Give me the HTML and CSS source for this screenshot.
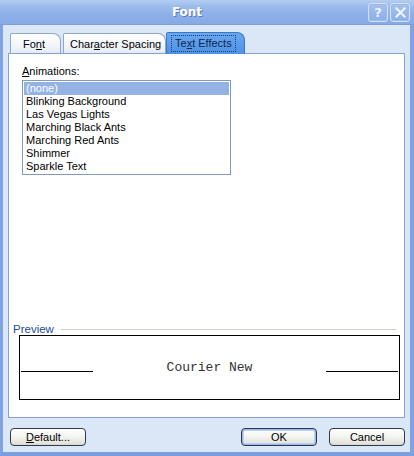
FILE: index.html
```html
<!DOCTYPE html>
<html>
<head>
<meta charset="utf-8">
<link rel="stylesheet" href="styles.css">
</head>
<body>
<div class="window">
  <div class="titlebar">
    <span class="title">Font</span>
    <div class="caption-btns">
      <span class="cbtn">?</span>
      <span class="cbtn">
        <svg width="11" height="11" viewBox="0 0 11 11"><path d="M1.5 1.5 L9.5 9.5 M9.5 1.5 L1.5 9.5" stroke="#eef3fc" stroke-width="2.2" stroke-linecap="square"/></svg>
      </span>
    </div>
  </div>
  <div class="body">
    <div class="tabs">
      <div class="tab tab-font">Fo<u>n</u>t</div>
      <div class="tab tab-spacing">Char<u>a</u>cter Spacing</div>
      <div class="tab tab-active"><span class="focus">Te<u>x</u>t Effects</span></div>
    </div>
    <div class="panel">
      <div class="label"><u>A</u>nimations:</div>
      <div class="listbox">
        <div class="item selected">(none)</div>
        <div class="item">Blinking Background</div>
        <div class="item">Las Vegas Lights</div>
        <div class="item">Marching Black Ants</div>
        <div class="item">Marching Red Ants</div>
        <div class="item">Shimmer</div>
        <div class="item">Sparkle Text</div>
      </div>
      <div class="spacer"></div>
      <div class="group-head">
        <span class="group-label">Preview</span>
        <span class="group-line"></span>
      </div>
      <div class="preview">
        <span class="pline"></span>
        <span class="ptext">Courier New</span>
        <span class="pline"></span>
      </div>
    </div>
    <div class="buttons">
      <button class="btn btn-default"><u>D</u>efault...</button>
      <div class="btn-right">
        <button class="btn btn-primary">OK</button>
        <button class="btn">Cancel</button>
      </div>
    </div>
  </div>
</div>
</body>
</html>
```
FILE: styles.css
```css
html, body {
  margin: 0;
  padding: 0;
}
body {
  width: 414px;
  height: 456px;
  overflow: hidden;
  font-family: "Liberation Sans", Arial, sans-serif;
  font-size: 11px;
}
.window {
  width: 414px;
  height: 456px;
  box-sizing: border-box;
  display: flex;
  flex-direction: column;
  background: #dbe6f7;
  border-left: 3px solid #80a3e2;
  border-right: 4px solid #80a3e2;
  border-bottom: 4px solid #7a9ee0;
}
.titlebar {
  height: 24px;
  margin: 0 -4px 0 -3px;
  flex: none;
  display: flex;
  align-items: center;
  justify-content: center;
  position: relative;
  background: linear-gradient(to bottom, #b4cdf1 0%, #9dbcec 25%, #8cb0e8 60%, #86aae5 100%);
  border-bottom: 1px solid #7b9ddb;
}
.title {
  color: #ffffff;
  font-family: "DejaVu Sans", sans-serif;
  font-weight: bold;
  font-size: 12px;
  text-shadow: 1px 1px 0 #5a7cbd;
  margin-left: -40px;
}
.caption-btns {
  position: absolute;
  right: 4px;
  top: 3px;
  display: flex;
  gap: 2px;
}
.cbtn {
  width: 20px;
  height: 19px;
  box-sizing: border-box;
  border: 1px solid #d3e0f6;
  border-radius: 3px;
  background: linear-gradient(to bottom, #a6c1ee, #8badea);
  color: #eef3fc;
  font-family: "DejaVu Sans", sans-serif;
  font-weight: bold;
  font-size: 13px;
  display: flex;
  align-items: center;
  justify-content: center;
  box-shadow: inset 0 0 0 1px #9cb8ea;
}
.body {
  flex: 1;
  display: flex;
  flex-direction: column;
  padding: 7px 5px 0 5px;
}
.tabs {
  display: flex;
  align-items: flex-end;
  padding-left: 2px;
  height: 21px;
  position: relative;
  z-index: 1;
}
.tab {
  height: 20px;
  box-sizing: border-box;
  border: 1px solid #91a7c9;
  border-bottom: none;
  border-radius: 2px 8px 0 0;
  background: linear-gradient(to bottom, #ffffff, #f2f5fa 60%, #e4ebf5);
  color: #000;
  padding: 4px 6px 0 6px;
  margin-right: 2px;
  white-space: nowrap;
  margin-bottom: 0;
}
.tab-font { width: 51px; padding-left: 12px; }
.tab-spacing { width: 103px; }
.tab-active {
  height: 22px;
  width: 79px;
  background: linear-gradient(to bottom, #6aa7ee, #4c92e6);
  border-color: #3a78c9;
  padding: 3px 4px 0 5px;
  margin-bottom: -1px;
  margin-left: -2px;
  margin-right: 0;
  color: #10264a;
}
.tab-active .focus {
  display: inline-block;
  outline: 1px dotted #1b3e78;
  padding: 0 3px;
  line-height: 15px;
}
.panel {
  height: 365px;
  box-sizing: border-box;
  background: #ffffff;
  border: 1px solid #87a2cf;
  display: flex;
  flex-direction: column;
  padding: 11px 6px 17px 4px;
}
.label {
  margin-left: 9px;
  height: 15px;
  line-height: 13px;
}
.listbox {
  margin-left: 9px;
  width: 209px;
  height: 95px;
  box-sizing: border-box;
  border: 1px solid #7f9db9;
  padding: 1px;
}
.item {
  height: 13px;
  line-height: 13px;
  padding-left: 2px;
}
.item.selected {
  background: #94b3e4;
  color: #ffffff;
}
.spacer { flex: 1; }
.group-head {
  display: flex;
  align-items: center;
  gap: 7px;
  height: 12px;
}
.group-label {
  color: #1d4b9a;
  line-height: 12px;
  font-size: 11.5px;
}
.group-line {
  flex: 1;
  height: 1px;
  background: #d0d0bf;
  margin-right: 2px;
}
.preview {
  margin: 0 0 0 6px;
  width: 381px;
  height: 65px;
  box-sizing: border-box;
  border: 1px solid #000;
  display: flex;
  align-items: center;
  justify-content: space-between;
  padding: 0 1px;
}
.pline {
  width: 72px;
  height: 1px;
  background: #000;
  margin-top: 8px;
}
.ptext {
  font-family: "Liberation Mono", "Courier New", monospace;
  font-size: 13px;
  color: #333;
}
.buttons {
  display: flex;
  justify-content: space-between;
  padding: 10px 0 0 2px;
}
.btn-right {
  display: flex;
  gap: 12px;
}
.btn {
  width: 76px;
  height: 18px;
  box-sizing: border-box;
  border: 1px solid #2b3a4f;
  border-radius: 4px;
  background: linear-gradient(to bottom, #ffffff 0%, #f3f3ef 50%, #e3e3dc 90%, #d5d5cd 100%);
  font-family: "Liberation Sans", Arial, sans-serif;
  font-size: 11px;
  color: #000;
  padding: 0;
  line-height: 15px;
}
.btn-primary {
  box-shadow: inset 0 0 0 1px #97b8ee, inset 0 0 0 2px #bcd2f4;
}
```
